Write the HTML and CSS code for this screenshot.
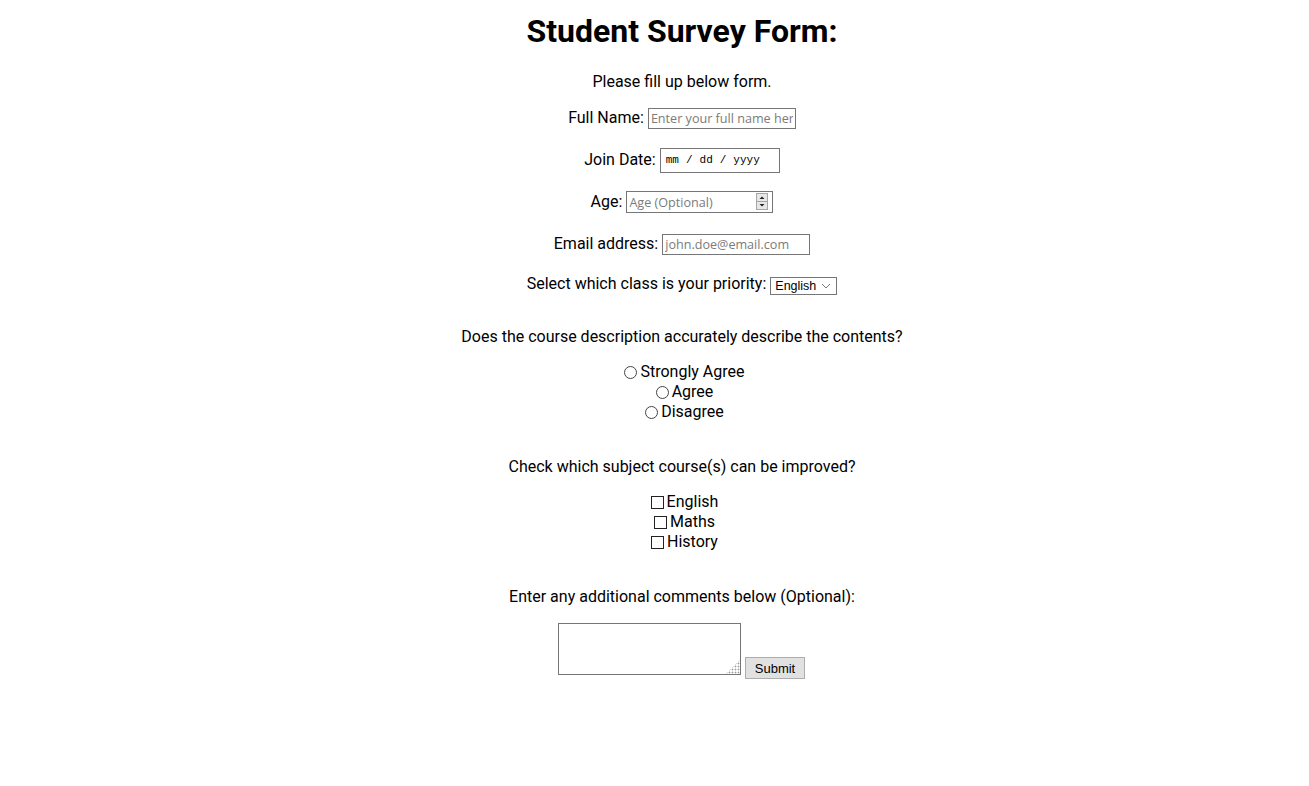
FILE: index.html
```html
<!DOCTYPE html>
<html lang="en">
<head>
<meta charset="utf-8">
<title>Student Survey Form</title>
<link rel="stylesheet" href="styles.css">
</head>
<body>
<div class="page">
  <h1 class="title">Student Survey Form:</h1>
  <p class="intro">Please fill up below form.</p>
  <form class="survey">
    <div class="fields">
      <div class="row"><label for="name">Full Name:</label><input id="name" class="field" type="text" placeholder="Enter your full name here"></div>
      <div class="row"><label for="date">Join Date:</label><input id="date" class="field date" type="date"></div>
      <div class="row"><label for="age">Age:</label><span class="spin-wrap"><input id="age" class="field" type="number" placeholder="Age (Optional)"><span class="spinner" aria-hidden="true"><svg width="12" height="17" viewBox="0 0 12 17"><rect x="0.5" y="0.5" width="11" height="16" fill="#e7e7e7" stroke="#a6a6a6"/><line x1="1" y1="8.5" x2="11" y2="8.5" stroke="#a6a6a6"/><path d="M3.5 6 L6 3.5 L8.5 6 Z" fill="#222"/><path d="M3.5 11 L6 13.5 L8.5 11 Z" fill="#222"/></svg></span></span></div>
      <div class="row"><label for="email">Email address:</label><input id="email" class="field" type="email" placeholder="john.doe@email.com"></div>
      <div class="row row-select"><label for="cls">Select which class is your priority:</label><select id="cls" class="select"><option>English</option><option>Maths</option><option>History</option></select></div>
    </div>
    <p class="question">Does the course description accurately describe the contents?</p>
    <div class="choices">
      <label class="choice"><input class="radio" type="radio" name="desc">Strongly Agree</label>
      <label class="choice"><input class="radio" type="radio" name="desc">Agree</label>
      <label class="choice"><input class="radio" type="radio" name="desc">Disagree</label>
    </div>
    <p class="question">Check which subject course(s) can be improved?</p>
    <div class="choices">
      <label class="choice"><input class="check" type="checkbox">English</label>
      <label class="choice"><input class="check" type="checkbox">Maths</label>
      <label class="choice"><input class="check" type="checkbox">History</label>
    </div>
    <p class="question">Enter any additional comments below (Optional):</p>
    <div class="comment-row"><textarea class="comments" aria-label="Comments"></textarea><button type="submit" class="submit">Submit</button></div>
  </form>
</div>
</body>
</html>
```
FILE: styles.css
```css
body {
  margin: 8px;
  font-family: Roboto, "Noto Sans", sans-serif;
  font-size: 16px;
  color: #000;
  background: #fff;
}
.page {
  text-align: center;
  padding-left: 55px;
}
.title {
  font-size: 32px;
  font-weight: 700;
  line-height: 38px;
  margin: 4px 0 0;
}
.intro {
  margin: 22px 0 0;
  line-height: 20px;
}
.survey {
  display: flex;
  flex-direction: column;
  align-items: center;
}
.fields {
  display: flex;
  flex-direction: column;
  align-items: center;
  gap: 16px;
  margin-top: 13px;
}
.row {
  display: flex;
  align-items: center;
  justify-content: center;
  gap: 4px;
  height: 26px;
  line-height: 20px;
}
.row-select label {
  margin-bottom: 4px;
}
.field {
  box-sizing: border-box;
  width: 148px;
  height: 21px;
  margin: 0;
  padding: 1px 2px;
  border: 1px solid #767676;
  border-radius: 0;
  font-family: "Open Sans", "Noto Sans", sans-serif;
  font-size: 12.6px;
  color: #000;
  background: #fff;
  outline: none;
}
.field::placeholder { color: #7b7b7b; }
.date {
  width: 120px;
  height: 25px;
  padding: 1px 4px;
  font-family: "Liberation Mono", "DejaVu Sans Mono", monospace;
  font-size: 11px;
}
.date::-webkit-calendar-picker-indicator { display: none; }
.date::-webkit-datetime-edit-text { padding: 0 6px; }
.spin-wrap {
  position: relative;
  display: inline-flex;
}
.spin-wrap .field {
  width: 147px;
  height: 22px;
}
.field::-webkit-inner-spin-button,
.field::-webkit-outer-spin-button {
  -webkit-appearance: none;
  margin: 0;
}
.spinner {
  position: absolute;
  top: 2px;
  right: 5px;
  display: flex;
  pointer-events: none;
}
.select {
  -webkit-appearance: none;
  appearance: none;
  box-sizing: border-box;
  width: 67px;
  height: 18px;
  margin: 0;
  padding: 0 16px 0 4px;
  border: 1px solid #767676;
  border-radius: 0;
  font-family: "Liberation Sans", Arial, sans-serif;
  font-size: 12.5px;
  color: #000;
  background: #fff url("data:image/svg+xml;utf8,<svg xmlns='http://www.w3.org/2000/svg' width='10' height='6' viewBox='0 0 10 6'><path d='M1 1 L5 5 L9 1' fill='none' stroke='%23777' stroke-width='1'/></svg>") no-repeat right 5px center;
}
.question {
  margin: 28px 0 15px;
  line-height: 20px;
}
.choices {
  display: flex;
  flex-direction: column;
  align-items: center;
  margin-bottom: 7px;
}
.choice {
  display: flex;
  align-items: center;
  height: 20px;
  line-height: 20px;
}
.radio,
.check {
  -webkit-appearance: none;
  appearance: none;
  box-sizing: border-box;
  width: 13px;
  height: 13px;
  margin: 0 3px 0 5px;
  background: #fff;
}
.radio {
  border: 1px solid #444;
  border-radius: 50%;
}
.radio:checked {
  background: radial-gradient(circle, #000 0 3px, #fff 3.5px);
}
.check {
  border: 1px solid #222;
  border-radius: 0;
}
.check:checked {
  background: #fff linear-gradient(135deg, transparent 40%, #000 40% 60%, transparent 60%);
}
.comment-row {
  display: flex;
  align-items: flex-end;
  gap: 4px;
  margin-top: 1px;
  margin-right: 1px;
}
.comments {
  box-sizing: border-box;
  width: 183px;
  height: 52px;
  margin: 0 0 4px;
  padding: 2px;
  border: 1px solid #767676;
  border-radius: 0;
  font-family: "Open Sans", sans-serif;
  font-size: 12px;
  outline: none;
}
.comments::-webkit-resizer {
  background:
    linear-gradient(135deg, #fff 52%, transparent 52%),
    radial-gradient(circle, #999 0.8px, transparent 1.1px) 0 0 / 3px 3px;
}
.submit {
  box-sizing: border-box;
  width: 60px;
  height: 22px;
  margin: 0;
  padding: 0 6px;
  border: 1px solid #adadad;
  border-radius: 0;
  background: #e1e1e1;
  font-family: "Liberation Sans", Arial, sans-serif;
  font-size: 13px;
  color: #000;
}
```
